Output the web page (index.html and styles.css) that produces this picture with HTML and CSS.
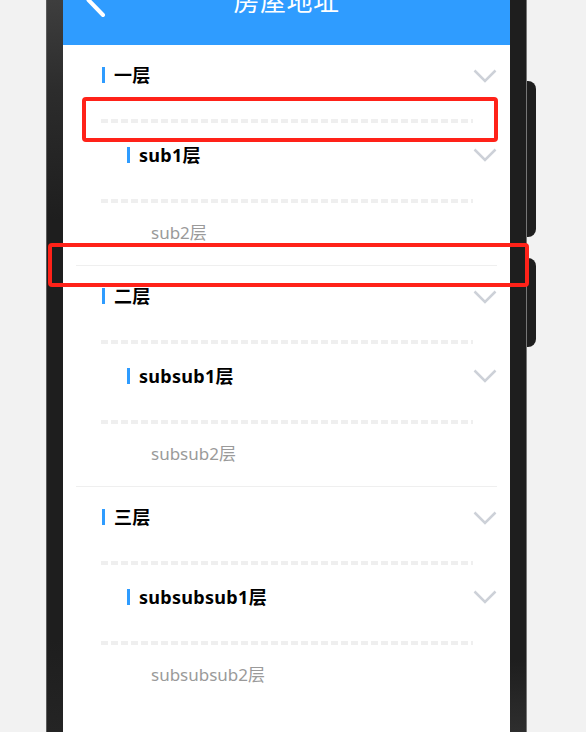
FILE: index.html
```html
<!DOCTYPE html>
<html lang="zh-CN">
<head>
<meta charset="utf-8">
<title>房屋地址</title>
<link rel="stylesheet" href="styles.css">
</head>
<body>
<div class="stage">
  <div class="phone">
    <div class="bezel bezel-l"></div>
    <div class="screen">
      <header class="topbar">
        <svg class="back" viewBox="0 0 24 40" width="24" height="40"><path d="M20 5 L5.5 20 L20 35" fill="none" stroke="#fff" stroke-width="4" stroke-linecap="round" stroke-linejoin="round"/></svg>
        <h1 class="topbar-title">房屋地址</h1>
        <span></span>
      </header>

      <section class="group">
        <div class="row r1"><i class="bar"></i><span class="t-main">一层</span><svg class="chev" viewBox="0 0 24 14" width="24" height="14"><path d="M1.5 1.5 L12 12 L22.5 1.5" fill="none" stroke="#cdd1d8" stroke-width="2.5"/></svg></div>
        <div class="dash"></div>
        <div class="row r2"><i class="bar"></i><span class="t-main">sub1层</span><svg class="chev" viewBox="0 0 24 14" width="24" height="14"><path d="M1.5 1.5 L12 12 L22.5 1.5" fill="none" stroke="#cdd1d8" stroke-width="2.5"/></svg></div>
        <div class="dash dash-2"></div>
        <div class="row r3"><span class="t-sub">sub2层</span></div>
      </section>

      <section class="group">
        <div class="row r1"><i class="bar"></i><span class="t-main">二层</span><svg class="chev" viewBox="0 0 24 14" width="24" height="14"><path d="M1.5 1.5 L12 12 L22.5 1.5" fill="none" stroke="#cdd1d8" stroke-width="2.5"/></svg></div>
        <div class="dash"></div>
        <div class="row r2"><i class="bar"></i><span class="t-main">subsub1层</span><svg class="chev" viewBox="0 0 24 14" width="24" height="14"><path d="M1.5 1.5 L12 12 L22.5 1.5" fill="none" stroke="#cdd1d8" stroke-width="2.5"/></svg></div>
        <div class="dash dash-2"></div>
        <div class="row r3"><span class="t-sub">subsub2层</span></div>
      </section>

      <section class="group">
        <div class="row r1"><i class="bar"></i><span class="t-main">三层</span><svg class="chev" viewBox="0 0 24 14" width="24" height="14"><path d="M1.5 1.5 L12 12 L22.5 1.5" fill="none" stroke="#cdd1d8" stroke-width="2.5"/></svg></div>
        <div class="dash"></div>
        <div class="row r2"><i class="bar"></i><span class="t-main">subsubsub1层</span><svg class="chev" viewBox="0 0 24 14" width="24" height="14"><path d="M1.5 1.5 L12 12 L22.5 1.5" fill="none" stroke="#cdd1d8" stroke-width="2.5"/></svg></div>
        <div class="dash dash-2"></div>
        <div class="row r3"><span class="t-sub">subsubsub2层</span></div>
      </section>
    </div>
    <div class="bezel bezel-r"></div>
  </div>
  <div class="keys">
    <span class="key key-1"></span>
    <span class="key key-2"></span>
  </div>

  <div class="mark mark-1"></div>
  <div class="mark mark-2"></div>
</div>
</body>
</html>
```

FILE: styles.css
```css
* { box-sizing: border-box; }

html, body {
  margin: 0;
  padding: 0;
  background: #f2f2f2;
}

body {
  font-family: "Noto Sans", "Noto Sans CJK SC", sans-serif;
}

.stage {
  position: relative;
  display: flex;
  align-items: flex-start;
  height: 732px;
  padding-left: 46px;
  overflow: hidden;
}

.phone {
  display: flex;
  height: 732px;
}

.bezel {
  width: 17px;
  height: 100%;
  background: #1e1e1e;
}

.bezel-l {
  border-left: 1px solid #5c5c5c;
  background: linear-gradient(to bottom, #3e3e3e 0, #2c2c2c 90px, #1e1e1e 220px, #1e1e1e 640px, #242424 732px);
}

.bezel-r {
  border-right: 1px solid #767676;
  background: linear-gradient(to bottom, #1e1e1e 0, #1e1e1e 660px, #2e2e2e 732px);
}

.screen {
  width: 447px;
  height: 100%;
  background: #fff;
  overflow: hidden;
}

.keys {
  display: flex;
  flex-direction: column;
  gap: 21px;
  margin-top: 81px;
}

.key {
  display: block;
  width: 9px;
  background: #1e1e1e;
  border-radius: 0 8px 8px 0;
}

.key-1 { height: 156px; }
.key-2 { height: 89px; }

/* header (page scrolled, only lower half visible) */
.topbar {
  display: grid;
  grid-template-columns: 1fr auto 1fr;
  align-items: center;
  height: 90px;
  margin-top: -45px;
  background: #2f9cff;
}

.back {
  display: block;
  margin-left: 20px;
}

.topbar-title {
  margin: 0;
  font-family: "Noto Sans CJK SC", sans-serif;
  font-size: 26px;
  line-height: 26px;
  font-weight: 400;
  color: #fff;
  letter-spacing: 0.5px;
}

/* list */
.group {
  margin: 0 13px;
}

.group + .group {
  border-top: 1px solid #efefef;
}

.row {
  display: flex;
  align-items: center;
  padding-bottom: 3px;
}

.r1 { height: 63px; padding-left: 26px; }
.r2 { height: 66px; padding-left: 51px; }
.r3 { height: 62px; padding-left: 75px; }

.bar {
  display: block;
  width: 3px;
  height: 16px;
  margin-right: 9px;
  background: #2f9cff;
}

.t-main {
  font-size: 18px;
  font-weight: 700;
  color: #000;
  line-height: 24px;
  letter-spacing: 0.3px;
}

.t-sub {
  font-size: 17px;
  font-weight: 400;
  color: #9a9a9a;
  line-height: 24px;
}

.chev {
  display: block;
  margin-left: auto;
  margin-top: 1px;
}

.dash {
  height: 4px;
  margin: 11px 24px 0 25px;
  background: repeating-linear-gradient(to right, #efefef 0, #efefef 7px, transparent 7px, transparent 10px);
}

.dash-2 {
  margin-top: 10px;
}

/* red annotation boxes over the screenshot */
.mark {
  position: absolute;
  border: 4px solid #ff2219;
  border-radius: 4px;
}

.mark-1 { left: 82px; top: 97px; width: 416px; height: 45px; }
.mark-2 { left: 48px; top: 243px; width: 481px; height: 44px; }
```
